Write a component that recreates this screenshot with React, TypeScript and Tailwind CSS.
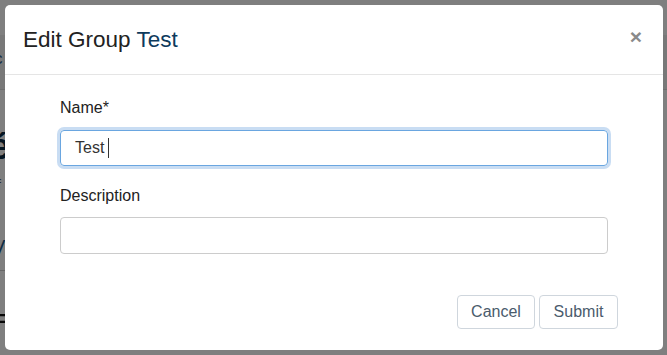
import React from 'react';

// 背景のページ（モーダルの下に少しだけ見える）
const PageBehind: React.FC = () => (
  <div className="absolute inset-0 bg-white">
    <div className="mt-[35px] h-[55px] bg-[#f0f0f0] border-b border-[#ddd]" />
    <span className="absolute left-[-6px] top-[46px] text-[17px] text-[#1d5a8a]">c</span>
    <span className="absolute left-[-10px] top-[120px] text-[36px] font-bold text-[#0b2a44]">é</span>
    <span className="absolute left-[-3px] top-[175px] text-[14px] text-[#555]">f</span>
    <span className="absolute left-[-8px] top-[232px] text-[20px] text-[#1d5a8a]">V</span>
    <div className="absolute left-0 top-[270px] h-px w-[40px] bg-[#ccc]" />
    <span className="absolute left-[-5px] top-[306px] text-[20px] font-bold text-[#111]">F</span>
  </div>
);

const App: React.FC = () => {
  return (
    <div
      className="relative h-[355px] w-[667px] overflow-hidden"
      style={{ fontFamily: '"Liberation Sans", Arial, sans-serif' }}
    >
      <PageBehind />
      <div className="absolute inset-0 bg-black/50" />

      {/* モーダル本体 */}
      <div className="absolute left-[5px] top-[5px] flex h-[345px] w-[658px] flex-col rounded-[5px] bg-white">
        <div className="flex h-[70px] items-center justify-between border-b border-[#e5e5e5] pl-[18px] pr-[21px]">
          <h4 className="text-[22.5px] text-[#222]">
            Edit Group <span className="text-[#0e3a5c]">Test</span>
          </h4>
          <button className="mb-[6px] text-[21px] font-bold leading-none text-[#8a8a8a]">×</button>
        </div>

        <div className="flex flex-1 flex-col px-[55px] pt-[23px]">
          <label className="text-[16px] leading-[20px] text-[#222]">Name*</label>
          <div className="mt-[12px] flex h-[36px] items-center rounded-[4px] border border-[#6aa6e0] pl-[14px] text-[16px] text-[#333] shadow-[0_0_0_3px_rgba(120,170,225,0.4)]">
            Test
            <span className="ml-[4px] h-[20px] w-px bg-[#333]" />
          </div>

          <label className="mt-[20px] text-[16px] leading-[20px] text-[#222]">Description</label>
          <div className="mt-[11px] h-[37px] rounded-[4px] border border-[#ccc]" />

          <div className="mr-[-10px] mt-[41px] flex justify-end gap-[4px]">
            <button className="h-[34px] w-[78px] rounded-[4px] border border-[#cfd6dd] text-[16px] text-[#4a5b6c]">
              Cancel
            </button>
            <button className="h-[34px] w-[79px] rounded-[4px] border border-[#cfd6dd] text-[16px] text-[#4a5b6c]">
              Submit
            </button>
          </div>
        </div>
      </div>
    </div>
  );
};

export default App;
